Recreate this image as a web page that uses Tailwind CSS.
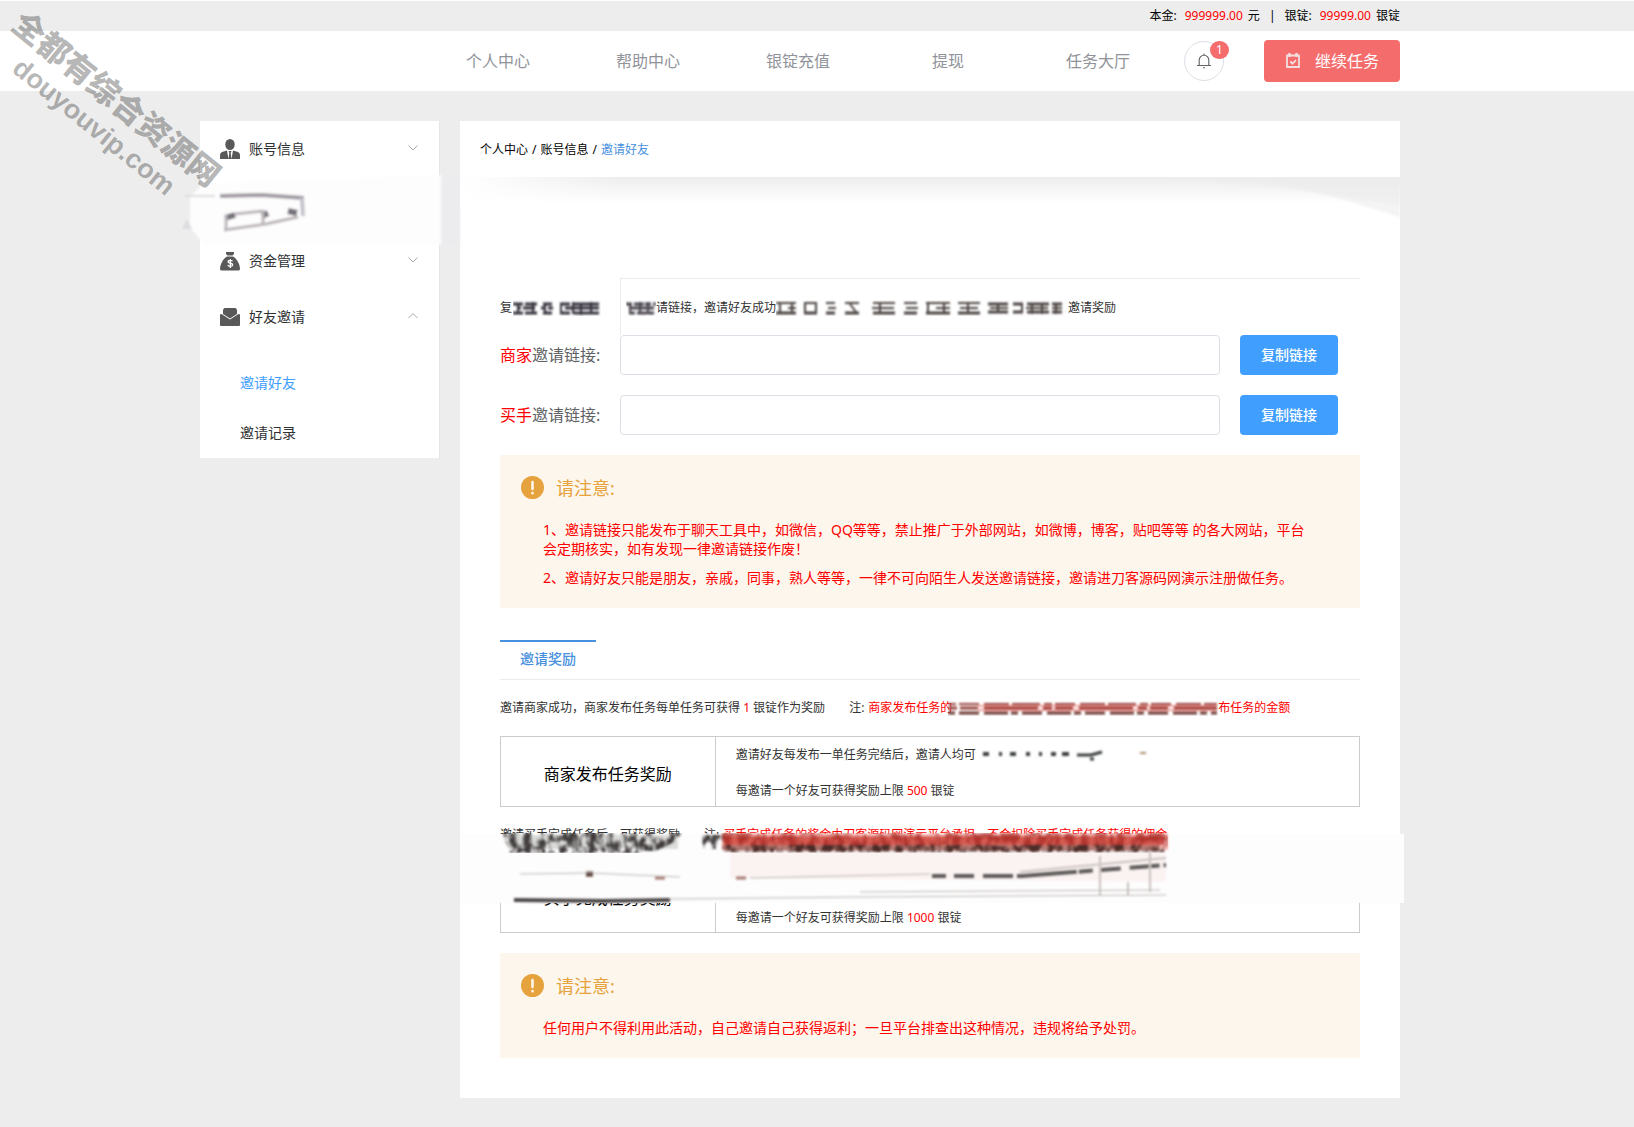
<!DOCTYPE html>
<html lang="zh-CN">
<head>
<meta charset="utf-8">
<title>邀请好友</title>
<script src="https://cdn.jsdelivr.net/npm/@tailwindcss/browser@4"></script>
</head>
<body class="relative min-h-screen overflow-x-hidden bg-[#ededed] font-['Noto_Sans','Noto_Sans_CJK_SC',sans-serif] text-xs text-[#333]">

<svg class="absolute size-0" aria-hidden="true">
  <defs>
    <filter id="soft" x="-20%" y="-50%" width="140%" height="200%"><feGaussianBlur stdDeviation="1"/></filter>
    <filter id="smear" x="0" y="0" width="100%" height="100%">
      <feTurbulence type="fractalNoise" baseFrequency="0.14 0.1" numOctaves="3" seed="4" result="n"/>
      <feColorMatrix in="n" values="0 0 0 0 0  0 0 0 0 0  0 0 0 0 0  4 0 0 0 -1.500" result="m"/>
      <feComposite in="SourceGraphic" in2="m" operator="in"/>
      <feGaussianBlur stdDeviation="0.9"/>
    </filter>
    <linearGradient id="fade" x1="0" y1="0" x2="0" y2="1"><stop offset="0" stop-color="#ededed"/><stop offset="1" stop-color="#fff"/></linearGradient>
    <linearGradient id="side" x1="0" y1="0" x2="1" y2="0"><stop offset="0" stop-color="#fff"/><stop offset="1" stop-color="#fff" stop-opacity="0"/></linearGradient>
  </defs>
</svg>

<div class="flex h-[31px] items-center justify-end border-t border-white pr-[234px] pl-[200px] text-black">
  <span>本金:</span><span class="ml-2 text-[#f00]">999999.00</span><span class="ml-[5px]">元</span>
  <span class="mx-[9px]">|</span>
  <span>银锭:</span><span class="ml-2 text-[#f00]">99999.00</span><span class="ml-[5px]">银锭</span>
</div>

<header class="flex h-15 items-center justify-end bg-white pr-[234px] pl-[200px]">
  <nav class="flex text-base text-[#909399]">
    <a href="#" class="w-[150px] text-center">个人中心</a>
    <a href="#" class="w-[150px] text-center">帮助中心</a>
    <a href="#" class="w-[150px] text-center">银锭充值</a>
    <a href="#" class="w-[150px] text-center">提现</a>
    <a href="#" class="w-[150px] text-center">任务大厅</a>
  </nav>
  <button aria-label="消息" class="relative ml-[11px] flex size-10 items-center justify-center rounded-full border border-[#dcdfe6] bg-white">
    <svg class="size-4" viewBox="0 0 16 16" fill="none" stroke="#606266" stroke-width="1.1"><path d="M1 12.5h14M3.2 12.5V7a4.8 4.8 0 0 1 9.6 0v5.500M8 .6v1.600M7 14.700h2"/></svg>
    <span class="absolute -top-px -right-[6px] flex h-[18px] min-w-[19px] items-center justify-center rounded-full bg-[#f56c6c] text-xs text-white">1</span>
  </button>
  <button class="ml-10 flex h-[42px] w-[136px] items-center rounded bg-[#f56c6c] pl-[21px] text-base text-white">
    <svg class="mr-[14px] size-4" viewBox="0 0 16 16" fill="none" stroke="#f3dede"><path stroke-width="1.800" d="M2 2.500h12v11.500H2z"/><path stroke-width="2.500" d="M4.500 0v4M11.500 0v4"/><path stroke-width="1.800" d="M5.300 8.500l2.200 2.200 3.500-3.500"/></svg>
    继续任务
  </button>
</header>

<main class="flex items-start gap-5 pt-[30px] pr-[234px] pb-[30px] pl-[200px]">
  <aside class="w-60 shrink-0 border-r border-[#e6e6e6] bg-white text-sm text-[#303133]">
    <a href="#" class="flex h-14 items-center pr-5 pl-5">
      <svg class="mr-[9px] size-5" viewBox="0 0 20 20" fill="#595959"><ellipse cx="10" cy="5.500" rx="4.700" ry="5.500"/><path d="M0 20v-4q0-2 2-3l5-1.500L8.500 20zM20 20v-4q0-2-2-3l-5-1.500L11.500 20zM8.500 12h3l-.8 2 .8 6h-3l.8-6z"/></svg>
      <span class="flex-1">账号信息</span>
      <svg class="size-3" viewBox="0 0 12 12" fill="none" stroke="#a5a8ae"><path d="M1.500 2.500L6 7l4.500-4.500"/></svg>
    </a>
    <div class="relative h-14" aria-hidden="true">
      <svg class="absolute -top-1 -left-5 h-[76px] w-[285px]" viewBox="0 0 285 76">
        <g filter="url(#soft)">
          <path fill="#fdfdfd" d="M24 10L262 2v70H24L10 54V24z"/>
          <path fill="#ecebee" d="M261 3h19v70h-19z"/>
          <path fill="#dddde0" d="M5 22h30v2H5zM2 56l5-10 5 10z"/>
          <path fill="none" stroke="#a29ba4" stroke-width="4" d="M40 23l42-1 42 3"/>
          <path fill="none" stroke="#c4c2cc" stroke-width="4" d="M122 25l1 18"/>
          <path fill="none" stroke="#77727a" stroke-width="6" d="M45 45l10-3M82 43l6-3M108 38l9 2"/>
          <path fill="none" stroke="#bbb6ba" stroke-width="3" d="M44 57l42-6 32-7M46 42v14M83 37v14M55 41l28-3"/>
        </g>
      </svg>
    </div>
    <a href="#" class="relative flex h-14 items-center pr-5 pl-5">
      <svg class="mr-[9px] size-5" viewBox="0 0 20 20" fill="#595959"><path d="M6 1h8v2l-1.500 1.500h-5L6 3z"/><path d="M7 5.500h6C17 8 20 13 20 18.500l-1 1H1l-1-1C0 13 3 8 7 5.500z"/><path fill="none" stroke="#fff" stroke-width="1.300" d="M12.500 10.200c-1-1.200-4.500-1.200-4.500.6 0 1.900 4.700 1 4.700 3 0 2-4 2-5 .4M10.300 8v9"/></svg>
      <span class="flex-1">资金管理</span>
      <svg class="size-3" viewBox="0 0 12 12" fill="none" stroke="#a5a8ae"><path d="M1.500 2.500L6 7l4.500-4.500"/></svg>
    </a>
    <a href="#" class="flex h-14 items-center pr-5 pl-5">
      <svg class="mr-[9px] size-5" viewBox="0 0 20 20" fill="#595959"><path d="M4.500 1h11L17 2.500V7l-7 4.500L3 7V2.500z"/><path d="M0 7.500L1.500 7 10 12.500 18.500 7l1.500.5V18q0 1-1 1H1q-1 0-1-1z"/></svg>
      <span class="flex-1">好友邀请</span>
      <svg class="size-3" viewBox="0 0 12 12" fill="none" stroke="#a5a8ae"><path d="M1.500 7L6 2.500 10.500 7"/></svg>
    </a>
    <div class="pt-[13px]">
      <a href="#" class="flex h-[50px] items-center pl-10 text-[#409eff]">邀请好友</a>
      <a href="#" class="flex h-[50px] items-center pl-10">邀请记录</a>
    </div>
  </aside>

  <div class="min-w-0 flex-1">
    <nav class="flex h-14 items-center gap-1 bg-white px-5 pt-0.5 text-black">
      <a href="#">个人中心</a><span>/</span><a href="#">账号信息</a><span>/</span><a href="#" class="text-[#4790de]">邀请好友</a>
    </nav>

    <div class="bg-white px-10 pb-10">
      <div class="relative -mx-10 h-[101px]" aria-hidden="true">
        <svg class="h-24 w-full" viewBox="0 0 940 96" preserveAspectRatio="none">
          <path fill="url(#fade)" d="M0 0h940v26H0z"/>
          <path fill="#ededed" opacity=".5" filter="url(#soft)" d="M700 0H940V28C900 24 850 10 700 2z"/>
          <path fill="#ededed" opacity=".6" filter="url(#soft)" d="M800 0H940V40C910 32 880 18 800 4z"/>
          <path fill="url(#side)" d="M0 0H160V30H0z"/>
        </svg>
      </div>

      <div class="ml-[120px] h-[57px] border-t border-l border-[#ebebeb]">
        <p class="-ml-[121px] flex h-[58px] items-center whitespace-nowrap">
          复
          <svg class="mr-[25px] ml-px h-4 w-[88px]" viewBox="0 0 88 16" aria-hidden="true"><g filter="url(#soft)" fill="none" stroke="#35313c"><path stroke-width="3" stroke-dasharray="10 2 12 6 9 8 10 4 30 1" d="M0 4h86M0 13h86"/><path stroke-width="3" stroke-dasharray="4 2 12 6 3 4 5 12 34 2" d="M4 8h82"/><path stroke-width="2" d="M5 3v11M20 2v12M32 3v10M48 3v11M60 2v12M68 3v12M78 2v12"/></g></svg>
          <svg class="h-4 w-[30px]" viewBox="0 0 30 16" aria-hidden="true"><g filter="url(#soft)" fill="none" stroke="#48444d" stroke-width="3"><path stroke-dasharray="6 2 10 1" d="M0 4h30M3 13h27"/><path d="M4 8h24"/><path stroke-width="2" d="M4 3v11M14 2v12M22 2v12"/></g></svg>
          请链接，邀请好友成功
          <svg class="mr-1 h-4 w-[288px]" viewBox="0 0 288 16" aria-hidden="true"><g filter="url(#soft)" fill="none" stroke="#4b4240"><path stroke-width="2" stroke-dasharray="20 8 13 9 9 10 14 14 22 9 13 9 24 8 22 6" d="M0 3h210"/><path stroke-width="3" stroke-dasharray="20 8 13 9 9 10 14 14 22 9 13 9 24 8 22 6" d="M0 13h210"/><path stroke-width="2" d="M4 3v10M12 8h8M16 3v10M29 3v10M40 3v10M52 8h8M74 4l6 8M96 8h22M104 3v10M130 8h12M152 3v10M160 8h14M168 3v10M184 8h18M192 3v10"/><path stroke-width="3" stroke-dasharray="20 5 10 4 22 3 20 2" d="M212 4h74M212 12h74"/><path stroke-width="2" d="M214 8h18M222 3v10M246 3v10M250 8h22M256 3v11M266 3v11M276 8h10M280 3v11"/></g></svg>
          邀请奖励
        </p>
      </div>

      <div class="flex flex-col gap-5">
        <div class="flex items-center">
          <label for="seller" class="w-[120px] text-base text-[#606266]"><span class="text-[#f00]">商家</span>邀请链接:</label>
          <input id="seller" type="text" class="h-10 min-w-0 flex-1 rounded border border-[#dcdfe6] bg-white px-4 text-sm">
          <button class="mr-[22px] ml-5 h-10 w-[98px] rounded bg-[#409eff] text-sm font-medium text-white">复制链接</button>
        </div>
        <div class="flex items-center">
          <label for="buyer" class="w-[120px] text-base text-[#606266]"><span class="text-[#f00]">买手</span>邀请链接:</label>
          <input id="buyer" type="text" class="h-10 min-w-0 flex-1 rounded border border-[#dcdfe6] bg-white px-4 text-sm">
          <button class="mr-[22px] ml-5 h-10 w-[98px] rounded bg-[#409eff] text-sm font-medium text-white">复制链接</button>
        </div>
      </div>

      <section class="mt-5 bg-[#fdf6ec] px-[21px] pt-[19px] pb-[21px] text-sm text-[#f00]">
        <h2 class="flex h-[27px] items-center gap-3 text-lg text-[#e6a23c]">
          <svg class="size-[23px]" viewBox="0 0 23 23"><circle cx="11.500" cy="11.500" r="11.500" fill="#e6a23c"/><path stroke="#fdf6ec" stroke-width="2.600" stroke-linecap="round" d="M11.500 6v7M11.500 17v.2"/></svg>
          请注意:
        </h2>
        <p class="mt-[19px] mr-5 ml-[22px] leading-[19px]">1、邀请链接只能发布于聊天工具中，如微信，QQ等等，禁止推广于外部网站，如微博，博客，贴吧等等 的各大网站，平台<br>会定期核实，如有发现一律邀请链接作废！</p>
        <p class="mt-[10px] ml-[22px] leading-[19px]">2、邀请好友只能是朋友，亲戚，同事，熟人等等，一律不可向陌生人发送邀请链接，邀请进刀客源码网演示注册做任务。</p>
      </section>

      <div class="mt-8 flex h-10 border-b border-[#ebebeb]">
        <button class="h-full border-t-2 border-[#4790de] px-5 pb-1 text-sm font-medium text-[#4790de]">邀请奖励</button>
      </div>

      <p class="flex h-14 items-center whitespace-nowrap">
        <span>邀请商家成功，商家发布任务每单任务可获得 <span class="text-[#f00]">1</span> 银锭作为奖励</span>
        <span class="ml-6">注: </span>
        <span class="ml-1 flex items-center text-[#f00]">商家发布任务的
          <svg class="-ml-1 h-4 w-[270px]" viewBox="0 0 270 16" aria-hidden="true"><g filter="url(#soft)" fill="none" stroke="#96443e"><path stroke-width="2" stroke-dasharray="8 3 20 5 25 3 28 4" d="M0 4h269"/><path stroke-width="3" stroke-dasharray="9 3 18 6 54 5" d="M0 8h269"/><path stroke-width="3" stroke="#6d3a34" stroke-dasharray="7 4 20 5 24 3" d="M0 13h269"/><path stroke="#e24b43" stroke-width="1" d="M30 6h239M30 10h239"/></g></svg>
          布任务的金额</span>
      </p>

      <table class="w-full border-collapse border border-[#ccc]">
        <tbody><tr>
          <th class="w-1/4 border border-[#ccc] pt-1 text-base font-normal text-black">商家发布任务奖励</th>
          <td class="pl-5 align-top leading-9">
            <div class="flex h-9 items-center">邀请好友每发布一单任务完结后，邀请人均可
              <svg class="ml-1 h-4 w-[170px]" viewBox="0 0 170 16" aria-hidden="true"><g filter="url(#soft)" fill="none" stroke="#3d4141" stroke-width="4"><path stroke-dasharray="6 10 3 8 6 10 4 9 3 9 5 6 7 11" d="M3 7h90"/><path stroke-width="3" d="M97 8h14l11-3M110 12h4"/><path stroke="#a98c6c" stroke-width="2" d="M160 6h6"/></g></svg>
            </div>
            <div class="h-[33px]">每邀请一个好友可获得奖励上限 <span class="text-[#f00]">500</span> 银锭</div>
          </td>
        </tr></tbody>
      </table>

      <div class="relative">
        <p class="flex h-14 items-center whitespace-nowrap">
          <span>邀请买手完成任务后，可获得奖励</span><span class="ml-6">注:</span>
          <span class="ml-1 text-[#f00]">买手完成任务的奖金由刀客源码网演示平台承担，不会扣除买手完成任务获得的佣金</span>
        </p>
        <table class="w-full border-collapse border border-[#ccc]">
          <tbody><tr class="h-[69px]">
            <th class="w-1/4 border border-[#ccc] text-base font-normal text-black">买手完成任务奖励</th>
            <td class="pl-5 align-bottom leading-7">每邀请一个好友可获得奖励上限 <span class="text-[#f00]">1000</span> 银锭</td>
          </tr></tbody>
        </table>
        <!-- Brush marks over the buyer row -->
        <svg class="absolute top-[25px] -left-10 h-[74px] w-[945px]" viewBox="0 0 945 74" aria-hidden="true">
          <path fill="#fdfdfd" d="M0 2h944v69H0z"/>
          <g filter="url(#soft)">
            <path fill="#fbf3f2" d="M270 16H706v34L270 46z"/>
            <path fill="#f9b7b1" d="M262 2H708v16H262z"/>
            <path fill="#d65d52" d="M264 4H704v9H264z"/>
            <path fill="#8a5048" opacity=".6" d="M264 13H700v6H264z"/>
            <path fill="#c4c4c2" opacity=".6" d="M44 3h174v14H50z"/>
          </g>
          <g filter="url(#smear)">
            <path fill="#3f3b3b" d="M42 1h130l10 20H50zM174 1h48l-6 8-20 10h-22zM240 3h24v14h-20z"/>
            <path fill="#a3221e" opacity=".7" d="M262 1h446v14H262z"/>
            <path fill="#4a2925" d="M264 13h440v7H264z"/>
          </g>
          <g filter="url(#soft)" fill="none">
            <path stroke="#4c2a22" stroke-width="5" d="M126 42h7"/>
            <path stroke="#a87b72" stroke-width="3" d="M276 46h10M195 46h10"/>
            <path stroke="#5d5a5a" stroke-width="4" stroke-dasharray="14 8 20 9 30 4 60 2" d="M472 44h90l144-11"/>
            <path stroke="#c9c2c0" stroke-width="2" d="M560 40l146-14M640 24v40M690 20v40M668 50v14"/>
            <path stroke="#bbb5b3" d="M60 42l70-1 90 4M290 46l180-4M210 67l190-2 306-2M400 60l300-2"/>
            <path stroke="#4e4848" stroke-width="4" d="M54 68l90 1 66-1"/>
          </g>
        </svg>
      </div>

      <section class="mt-5 bg-[#fdf6ec] px-[21px] pt-[19px] pb-[21px] text-sm text-[#f00]">
        <h2 class="flex h-[27px] items-center gap-3 text-lg text-[#e6a23c]">
          <svg class="size-[23px]" viewBox="0 0 23 23"><circle cx="11.500" cy="11.500" r="11.500" fill="#e6a23c"/><path stroke="#fdf6ec" stroke-width="2.600" stroke-linecap="round" d="M11.500 6v7M11.500 17v.2"/></svg>
          请注意:
        </h2>
        <p class="mt-[19px] ml-[22px] leading-[19px]">任何用户不得利用此活动，自己邀请自己获得返利；一旦平台排查出这种情况，违规将给予处罚。</p>
      </section>
    </div>
  </div>
</main>

<div class="pointer-events-none absolute top-[74px] -left-[22px] w-64 rotate-[39deg] text-center whitespace-nowrap text-black/30">
  <div class="font-['Noto_Sans_CJK_SC',sans-serif] text-[32px] leading-[38px] font-black">全都有综合资源网</div>
  <div class="font-['Liberation_Sans',sans-serif] text-[27px] leading-[38px] font-bold">douyouvip.com</div>
</div>
</body>
</html>
